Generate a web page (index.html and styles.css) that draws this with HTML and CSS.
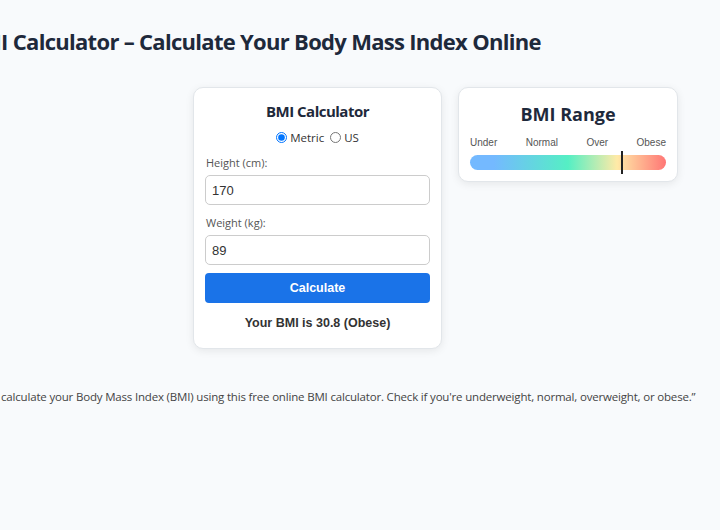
FILE: index.html
```html
<!DOCTYPE html>
<html lang="en">
<head>
  <meta charset="UTF-8">
  <title>BMI Calculator – Calculate Your Body Mass Index Online</title>
  <link rel="stylesheet" href="styles.css">
</head>
<body>

  <h1 class="page-title">BMI Calculator – Calculate Your Body Mass Index Online</h1>

  <div class="tools">
    <!-- Calculator -->
    <div class="card calc-card">
      <h2>BMI Calculator</h2>
      <div class="units">
        <label><input type="radio" name="unit" value="metric" checked> Metric</label>
        <label><input type="radio" name="unit" value="us"> US</label>
      </div>

      <label class="field-label" for="height">Height (cm):</label>
      <input type="text" id="height" class="field" value="170">

      <label class="field-label" for="weight">Weight (kg):</label>
      <input type="text" id="weight" class="field" value="89">

      <button type="button" class="calc-btn">Calculate</button>

      <div class="result">Your BMI is 30.8 (Obese)</div>
    </div>

    <!-- Range -->
    <div class="card range-card">
      <h2>BMI Range</h2>
      <div class="range-labels">
        <span>Under</span>
        <span>Normal</span>
        <span>Over</span>
        <span>Obese</span>
      </div>
      <div class="range-bar">
        <div class="marker" style="left: 77%;"></div>
      </div>
    </div>
  </div>

  <p class="description">calculate your Body Mass Index (BMI) using this free online BMI calculator. Check if you're underweight, normal, overweight, or obese.”</p>

</body>
</html>
```

FILE: styles.css
```css
body {
  margin: 0;
  font-family: "Open Sans", "Noto Sans", sans-serif;
  background-color: #f8fafc;
  color: #1e293b;
  overflow: hidden;
}

.page-title {
  margin: 26px 0 0 -33px;
  font-size: 22px;
  font-weight: 700;
  letter-spacing: -0.7px;
  white-space: nowrap;
  color: #1e293b;
}

.tools {
  display: flex;
  align-items: flex-start;
  gap: 16px;
  padding-left: 193px;
  margin-top: 31px;
}

.card {
  background-color: white;
  border: 1px solid #e2e6ea;
  border-radius: 10px;
  box-shadow: 0 2px 8px rgba(0, 0, 0, 0.08);
  box-sizing: border-box;
}

.card h2 {
  margin: 0;
  text-align: center;
  color: #1e293b;
  font-weight: 700;
}

.calc-card {
  width: 249px;
  padding: 12px 11px 18px;
}

.calc-card h2 {
  font-size: 15px;
  line-height: 22px;
  letter-spacing: -0.5px;
}

.units {
  display: flex;
  justify-content: center;
  gap: 6px;
  margin-top: 8px;
  font-size: 11.5px;
  color: #333;
}

.units label {
  display: flex;
  align-items: center;
  gap: 1px;
}

.units input {
  margin: 0 2px 0 0;
  width: 11px;
  height: 11px;
}

.field-label {
  display: block;
  margin: 10px 0 5px 1px;
  font-size: 11px;
  color: #555;
}

.field {
  display: block;
  width: 100%;
  box-sizing: border-box;
  height: 30px;
  padding: 0 6px;
  font-family: Arial, "Liberation Sans", sans-serif;
  font-size: 13px;
  color: #333;
  border: 1px solid #ccc;
  border-radius: 5px;
  background-color: white;
}

.calc-btn {
  display: block;
  width: 100%;
  height: 30px;
  margin-top: 8px;
  border: none;
  border-radius: 4px;
  background-color: #1a73e8;
  color: white;
  font-family: Arial, "Liberation Sans", sans-serif;
  font-size: 12.5px;
  font-weight: bold;
}

.result {
  margin-top: 13px;
  text-align: center;
  font-family: Arial, "Liberation Sans", sans-serif;
  font-size: 12.5px;
  font-weight: bold;
  color: #333;
}

.range-card {
  width: 220px;
  padding: 14px 11px 11px;
}

.range-card h2 {
  font-size: 18px;
  line-height: 24px;
}

.range-labels {
  display: flex;
  justify-content: space-between;
  margin-top: 11px;
  font-family: Arial, "Liberation Sans", sans-serif;
  font-size: 10px;
  color: #555;
}

.range-bar {
  position: relative;
  height: 15px;
  margin-top: 7px;
  border-radius: 8px;
  background: linear-gradient(to right, #74b9ff 0%, #74b9ff 12%, #55efc4 50%, #ffeaa7 75%, #ff7675 100%);
}

.marker {
  position: absolute;
  top: -4px;
  bottom: -4px;
  width: 2px;
  background-color: #222;
}

.description {
  margin: 40px 0 0 1px;
  font-size: 11.5px;
  letter-spacing: -0.18px;
  color: #444;
  white-space: nowrap;
}
```
